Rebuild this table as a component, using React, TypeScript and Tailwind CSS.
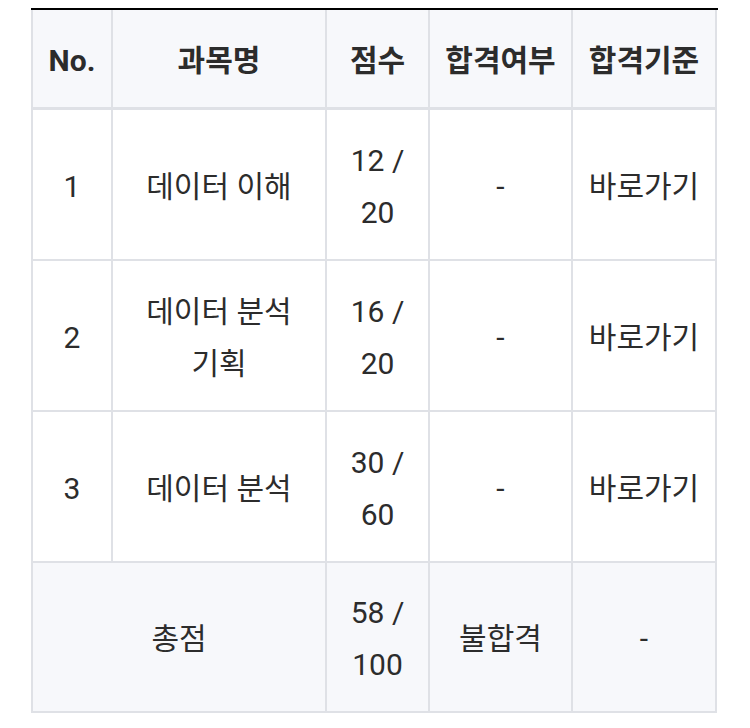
import React from "react";

const rows = [
  { no: "1", name: "데이터 이해", score: "12 / 20" },
  { no: "2", name: "데이터 분석 기획", score: "16 / 20" },
  { no: "3", name: "데이터 분석", score: "30 / 60" },
];

const cell =
  "flex items-center justify-center text-center px-[12px] pt-[4px] text-[30px] leading-[52px] text-[#2c2c2c] break-keep";

export default function App() {
  return (
    <div
      className="bg-white w-[750px] h-[728px] pt-[8px]"
      style={{ fontFamily: 'Roboto, "Noto Sans CJK KR", "Noto Sans", sans-serif' }}
    >
      <div className="ml-[31px] w-[687px] h-[2px] bg-black" />
      <div className="ml-[31px] w-[686px] grid grid-cols-[78px_212px_101px_141px_142px] gap-[2px] bg-[#dfe1e6] px-[2px] pb-[2px]">
        {["No.", "과목명", "점수", "합격여부", "합격기준"].map((h) => (
          <div
            key={h}
            className={`${cell} h-[98px] bg-[#f7f8fb] border-b border-[#dfe1e6] font-bold text-[#1e1e1e]`}
          >
            {h}
          </div>
        ))}
        {rows.map((r) => (
          <React.Fragment key={r.no}>
            <div className={`${cell} h-[149px] bg-white`}>{r.no}</div>
            <div className={`${cell} h-[149px] bg-white`}>{r.name}</div>
            <div className={`${cell} h-[149px] bg-white`}>{r.score}</div>
            <div className={`${cell} h-[149px] bg-white`}>-</div>
            <div className={`${cell} h-[149px] bg-white`}>바로가기</div>
          </React.Fragment>
        ))}
        <div className={`${cell} col-span-2 h-[148px] bg-[#f7f8fb]`}>총점</div>
        <div className={`${cell} h-[148px] bg-[#f7f8fb]`}>58 / 100</div>
        <div className={`${cell} h-[148px] bg-[#f7f8fb]`}>불합격</div>
        <div className={`${cell} h-[148px] bg-[#f7f8fb]`}>-</div>
      </div>
    </div>
  );
}
